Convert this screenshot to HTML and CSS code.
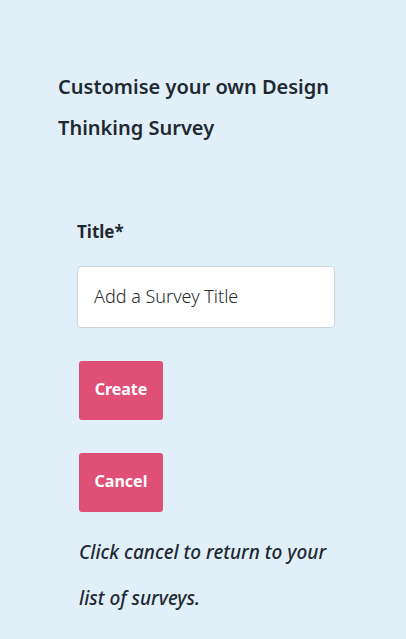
FILE: index.html
```html
<!DOCTYPE html>
<html lang="en">
<head>
<meta charset="utf-8">
<link rel="stylesheet" href="styles.css">
</head>
<body>
<main class="page">
  <h1 class="heading">Customise your own Design Thinking Survey</h1>
  <form class="form">
    <label class="label" for="title">Title*</label>
    <input class="input" id="title" type="text" placeholder="Add a Survey Title">
    <button class="btn" type="button">Create</button>
    <button class="btn" type="button">Cancel</button>
    <p class="note">Click cancel to return to your list of surveys.</p>
  </form>
</main>
</body>
</html>
```
FILE: styles.css
```css
html, body {
  margin: 0;
  padding: 0;
  background: #e1f0f8;
}
body {
  font-family: "Noto Sans", "DejaVu Sans", sans-serif;
  color: #1f2933;
  width: 406px;
  height: 639px;
  overflow: hidden;
}
.page {
  padding: 66px 40px 0 58px;
}
.heading {
  margin: 0;
  font-size: 20px;
  font-weight: 600;
  line-height: 41px;
  width: 290px;
}
.form {
  display: flex;
  flex-direction: column;
  align-items: flex-start;
  padding: 72px 0 0 19px;
}
.label {
  font-size: 17px;
  font-weight: 700;
  line-height: 24px;
}
.input {
  box-sizing: border-box;
  margin-top: 22px;
  width: 258px;
  height: 62px;
  border: 1px solid #cdd6dc;
  border-radius: 4px;
  background: #fff;
  padding: 0 16px 2px;
  font-family: inherit;
  font-size: 18px;
  font-weight: 300;
  color: #222;
}
.input::placeholder {
  color: #2a2a2a;
}
.btn {
  margin: 33px 0 0 2px;
  width: 84px;
  height: 59px;
  border: none;
  border-radius: 3px;
  background: #e04f76;
  color: #fff;
  font-family: inherit;
  font-size: 16px;
  font-weight: 700;
  padding: 0 0 3px;
}
.note {
  margin: 17px 0 0 2px;
  font-size: 19px;
  font-style: italic;
  font-weight: 500;
  line-height: 46px;
  width: 262px;
}
```
